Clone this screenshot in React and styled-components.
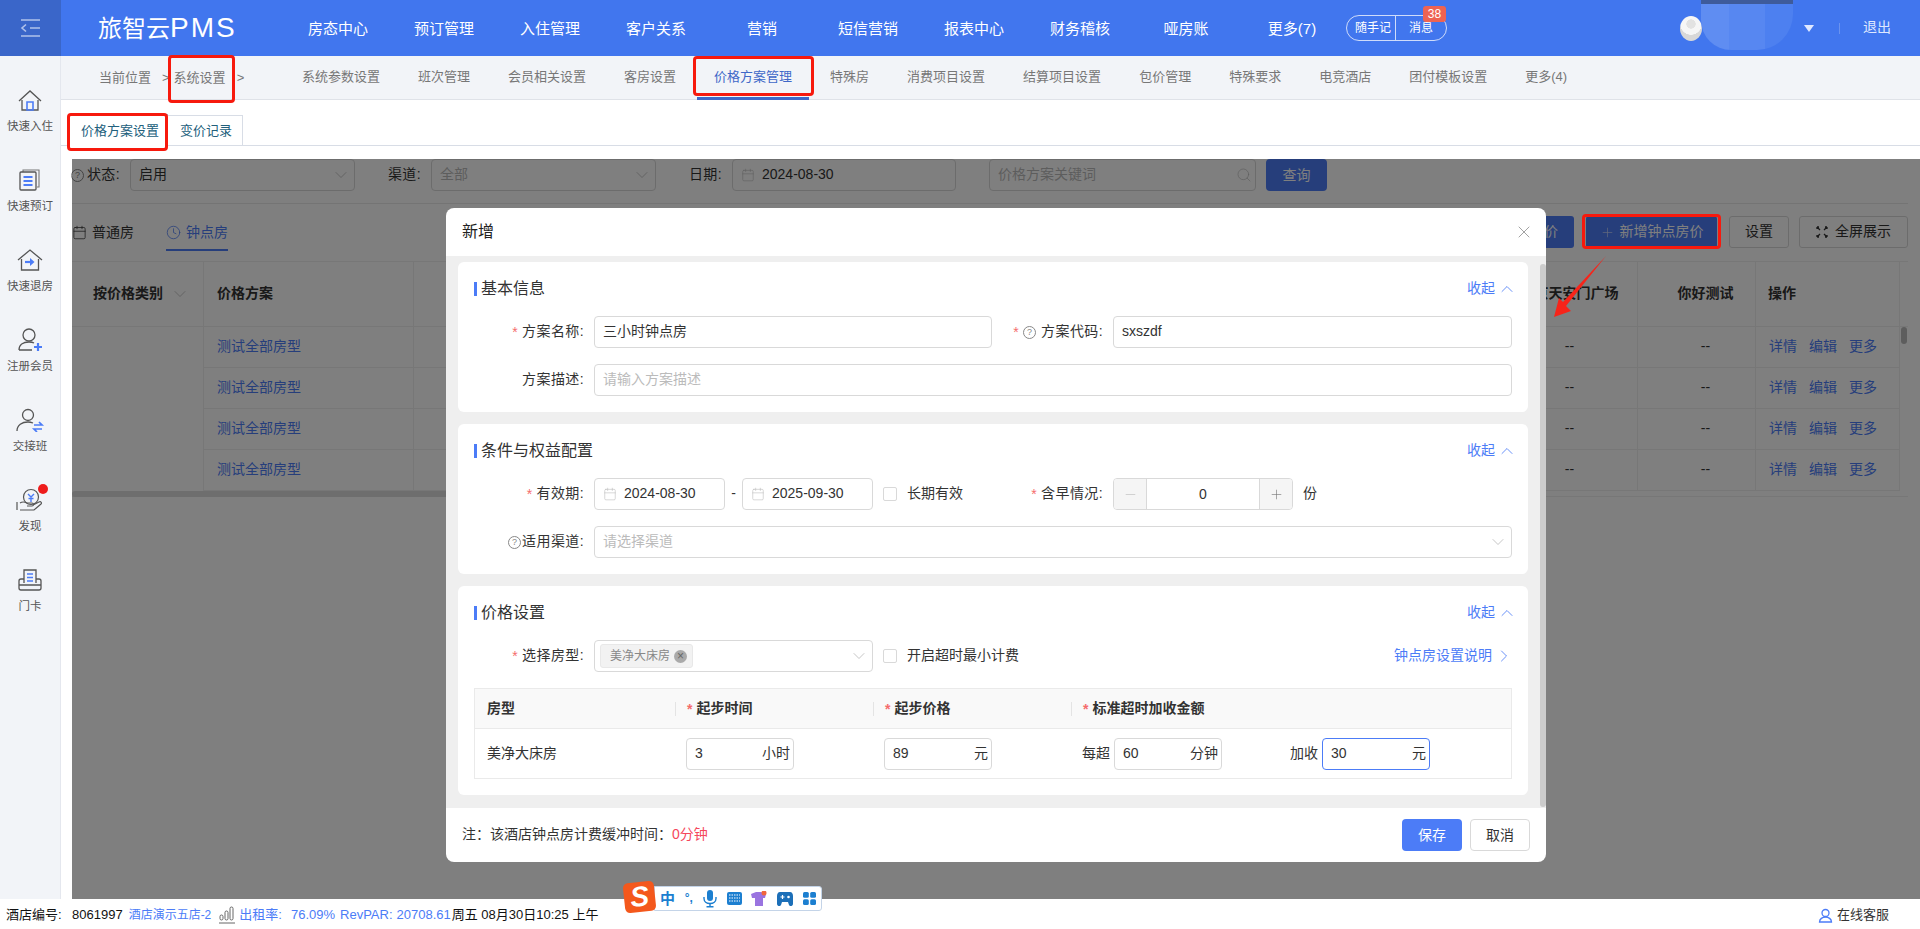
import React from 'react'
import styled, { createGlobalStyle } from 'styled-components'
import { Calendar, Clock, X, Plus, Minus, Search, ChevronDown, ChevronUp, ChevronRight } from 'lucide-react'

const BLUE = '#4c7cf7'
const FONT = '"Liberation Sans", "Noto Sans CJK SC", sans-serif'

const navItems = ['房态中心', '预订管理', '入住管理', '客户关系', '营销', '短信营销', '报表中心', '财务稽核', '哑房账', '更多(7)']
const subItems = ['系统参数设置', '班次管理', '会员相关设置', '客房设置', '价格方案管理', '特殊房', '消费项目设置', '结算项目设置', '包价管理', '特殊要求', '电竞酒店', '团付模板设置', '更多(4)']

const Help = ({ gap }) => <HelpMark $gap={gap}>?</HelpMark>
const Chevron = () => <ChevronDown size={20} strokeWidth={1} color="#bbb" />

const HomeIcon = () => (
  <svg width="28" height="24" viewBox="0 0 28 24" fill="none">
    <path d="M3 13 14 3l11 10M6 12v10h16V12" stroke="#555" strokeWidth="1.3" />
    <path d="M11 14h6v8h-6z" stroke={BLUE} strokeWidth="1.6" />
  </svg>
)
const BookIcon = () => (
  <svg width="28" height="24" viewBox="0 0 28 24" fill="none">
    <path d="M7 4V2h16v17h-2" stroke="#777" strokeWidth="1.1" />
    <rect x="4" y="4" width="16" height="18" rx="1" stroke="#555" strokeWidth="1.3" />
    <path d="M7.5 9h9M7.5 13h9M7.5 17h9" stroke={BLUE} strokeWidth="1.8" />
  </svg>
)
const OutIcon = () => (
  <svg width="28" height="24" viewBox="0 0 28 24" fill="none">
    <path d="M2 12 14 2l12 10M5.500 11v11h17V11" stroke="#555" strokeWidth="1.3" />
    <path d="M9 14h8" stroke={BLUE} strokeWidth="2.2" />
    <path d="m14 10 4.500 4-4.500 4z" fill={BLUE} />
  </svg>
)
const JoinIcon = () => (
  <svg width="28" height="24" viewBox="0 0 28 24" fill="none">
    <circle cx="13" cy="7" r="6" stroke="#555" strokeWidth="1.3" />
    <path d="M3 22c0-5 4-8 10-8 2 0 4 .4 5 1M3 22h13" stroke="#555" strokeWidth="1.3" />
    <path d="M22 15v8M18 19h8" stroke={BLUE} strokeWidth="2.200" />
  </svg>
)
const ShiftIcon = () => (
  <svg width="30" height="24" viewBox="0 0 30 24" fill="none">
    <circle cx="13" cy="7" r="5.500" stroke="#555" strokeWidth="1.3" />
    <path d="M2 23c0-6 5-9 11-9 2 0 3 .2 5 1" stroke="#555" strokeWidth="1.3" />
    <path d="M19 17h8l-3-3M27 21h-8l3 3" stroke={BLUE} strokeWidth="1.700" />
  </svg>
)
const FindIcon = () => (
  <svg width="30" height="24" viewBox="0 0 30 24" fill="none">
    <circle cx="16" cy="9" r="7.500" stroke="#555" strokeWidth="1.2" />
    <path d="M13 6l3 3 3-3M16 9v5M13.500 10.500h5" stroke={BLUE} strokeWidth="1.4" />
    <path d="M2 14v8M5 15c3-2 5-1 7 0h5c2 0 2 3 0 3h-5M18 17l6-3c2-1 3 1 2 2l-7 6H5" stroke="#555" strokeWidth="1.2" />
  </svg>
)
const CardIcon = () => (
  <svg width="28" height="24" viewBox="0 0 28 24" fill="none">
    <path d="M8 15V2h12v13" stroke="#555" strokeWidth="1.3" />
    <path d="M11 6h6M11 9.500h6M11 13h6" stroke={BLUE} strokeWidth="1.4" />
    <path d="M8 11H5c-1 0-2 1-2 2v7c0 1 1 2 2 2h18c1 0 2-1 2-2v-7c0-1-1-2-2-2h-3M3 17h22" stroke="#555" strokeWidth="1.3" />
  </svg>
)
const FullIcon = () => (
  <svg width="12" height="12" viewBox="0 0 12 12" fill="none" stroke="#333" strokeWidth="1.3">
    <path d="M1 1l3 3M11 1 8 4M1 11l3-3M11 11 8 8M1 1h2M1 1v2M11 1H9M11 1v2M1 11h2M1 11V9M11 11H9M11 11V9" />
  </svg>
)
const BarsIcon = () => (
  <svg width="16" height="18" viewBox="0 0 16 18" fill="none" stroke="#666" strokeWidth="1">
    <rect x="1" y="9" width="3" height="5" rx="1.500" />
    <rect x="6" y="5" width="3" height="9" rx="1.500" />
    <rect x="11" y="1" width="3" height="13" rx="1.500" />
    <path d="M0 17h16" />
  </svg>
)
const ServiceIcon = () => (
  <svg width="15" height="15" viewBox="0 0 15 15" fill="none" stroke={BLUE} strokeWidth="1.300">
    <circle cx="7.500" cy="5" r="3.500" />
    <path d="M1.500 14c0-3 3-5 6-5s6 2 6 5z" />
  </svg>
)

const sideItems = [
  { label: '快速入住', icon: <HomeIcon /> },
  { label: '快速预订', icon: <BookIcon /> },
  { label: '快速退房', icon: <OutIcon /> },
  { label: '注册会员', icon: <JoinIcon /> },
  { label: '交接班', icon: <ShiftIcon /> },
  { label: '发现', icon: <FindIcon />, dot: true },
  { label: '门卡', icon: <CardIcon /> },
]

const Fold = () => (
  <FoldLink>收起<ChevronUp size={20} strokeWidth={1} /></FoldLink>
)

const DateBox = ({ value, wide }) => (
  <Box $w={wide || 131}>
    <Calendar size={14} strokeWidth={1} color="#bbb" />
    <DateText>{value}</DateText>
  </Box>
)

const Suffixed = ({ value, unit, focus }) => (
  <UnitBox $focus={focus}>
    <span>{value}</span>
    <span>{unit}</span>
  </UnitBox>
)

const App = () => (
  <Page>
    <GlobalStyle />
    <TopBar>
      <Toggle>
        <svg width="22" height="22" viewBox="0 0 22 22" fill="none" stroke="#b0c2ea" strokeWidth="1.6">
          <path d="M1 3h19M10 11h10M1 19h19M6 7.500 2 11l4 3.500" />
        </svg>
      </Toggle>
      <Logo>旅智云<LogoLatin>PMS</LogoLatin></Logo>
      {navItems.map(item => <NavItem key={item}>{item}</NavItem>)}
      <Pill>
        <PillPart>随手记</PillPart>
        <PillPart $last>消息</PillPart>
        <Badge>38</Badge>
      </Pill>
      <UserArea>
        <Avatar />
        <BlobGap />
        <Caret />
        <UserDivider />
        <Logout>退出</Logout>
      </UserArea>
    </TopBar>

    <Middle>
      <Sidebar>
        {sideItems.map(item => (
          <SideItem key={item.label}>
            <SideIcon>
              {item.icon}
              {item.dot && <RedDot />}
            </SideIcon>
            <SideLabel>{item.label}</SideLabel>
          </SideItem>
        ))}
      </Sidebar>

      <Main>
        <SubNav>
          <Crumbs>
            <span>当前位置</span>
            <CrumbSep>&gt;</CrumbSep>
            <span>系统设置</span>
            <CrumbSep>&gt;</CrumbSep>
          </Crumbs>
          {subItems.map(item => (
            <SubTab key={item} $active={item === '价格方案管理'}>{item}</SubTab>
          ))}
        </SubNav>

        <PageTabs>
          <PageTab $active>价格方案设置</PageTab>
          <PageTab>变价记录</PageTab>
        </PageTabs>

        <Content>
          <FilterRow>
            <FilterLabel $w={58}><Help />状态:</FilterLabel>
            <FilterBox $w={225}>启用<Chevron /></FilterBox>
            <FilterLabel $w={76}>渠道:</FilterLabel>
            <FilterBox $w={225} $muted>全部<Chevron /></FilterBox>
            <FilterLabel $w={76}>日期:</FilterLabel>
            <FilterBox $w={224} $start>
              <Calendar size={14} strokeWidth={1} color="#bbb" />
              <span>2024-08-30</span>
            </FilterBox>
            <FilterBox $w={267} $muted $gapLeft={33}>价格方案关键词<Search size={16} strokeWidth={1} color="#bbb" /></FilterBox>
            <QueryButton>查询</QueryButton>
          </FilterRow>

          <TypeRow>
            <TypeTab><Calendar size={15} strokeWidth={1.2} />普通房</TypeTab>
            <TypeTab $active><Clock size={15} strokeWidth={1.2} />钟点房</TypeTab>
            <Actions>
              <PrimaryButton $w={88}>批量改价</PrimaryButton>
              <PrimaryButton $w={131}><Plus size={15} strokeWidth={1.1} color="#c7d4f7" />新增钟点房价</PrimaryButton>
              <PlainButton $w={60}>设置</PlainButton>
              <PlainButton $w={109}><FullIcon />全屏展示</PlainButton>
            </Actions>
          </TypeRow>

          <PriceTable>
            <HeadCell $pad={21}>按价格类别<Chevron /></HeadCell>
            <HeadCell $pad={13}>价格方案</HeadCell>
            <HeadCell />
            <HeadCell $center>北京天安门广场</HeadCell>
            <HeadCell $center $shift>你好测试</HeadCell>
            <HeadCell $pad={12}>操作</HeadCell>
            <HeadCell $bare />
            <MergedCell />
            {[0, 1, 2, 3].map(row => (
              <React.Fragment key={row}>
                <LinkCell>测试全部房型</LinkCell>
                <BodyCell />
                <BodyCell $center>--</BodyCell>
                <BodyCell $center $shift>--</BodyCell>
                <ActionCell><a>详情</a><a>编辑</a><a>更多</a></ActionCell>
                {row === 0 && <VScroll><VThumb /></VScroll>}
              </React.Fragment>
            ))}
          </PriceTable>
          <HScroll><HThumb /></HScroll>

          <Mask>
            <Dialog>
              <DialogHead>
                <DialogTitle>新增</DialogTitle>
                <X size={20} strokeWidth={1.1} color="#999" />
              </DialogHead>
              <DialogBody>
                <Cards>
                  <Card>
                    <CardHead><CardTitle>基本信息</CardTitle><Fold /></CardHead>
                    <FormGrid>
                      <Label><Req />方案名称:</Label>
                      <Box>三小时钟点房</Box>
                      <Label><Req /><Help gap={5} />方案代码:</Label>
                      <Box>sxszdf</Box>
                    </FormGrid>
                    <FormGrid>
                      <Label>方案描述:</Label>
                      <Wide><Box $muted>请输入方案描述</Box></Wide>
                    </FormGrid>
                  </Card>

                  <Card>
                    <CardHead><CardTitle>条件与权益配置</CardTitle><Fold /></CardHead>
                    <FormGrid>
                      <Label><Req />有效期:</Label>
                      <Inline>
                        <DateBox value="2024-08-30" />
                        <Dash>-</Dash>
                        <DateBox value="2025-09-30" />
                        <Tick />
                        <span>长期有效</span>
                      </Inline>
                      <Label><Req />含早情况:</Label>
                      <Inline>
                        <Stepper>
                          <StepSide><Minus size={15} strokeWidth={1} color="#bbb" /></StepSide>
                          <StepValue>0</StepValue>
                          <StepSide $right><Plus size={15} strokeWidth={1} color="#777" /></StepSide>
                        </Stepper>
                        <Unit>份</Unit>
                      </Inline>
                    </FormGrid>
                    <FormGrid>
                      <Label><Help gap={1} />适用渠道:</Label>
                      <Wide>
                        <Box $muted $between>请选择渠道<Chevron /></Box>
                      </Wide>
                    </FormGrid>
                  </Card>

                  <Card>
                    <CardHead><CardTitle>价格设置</CardTitle><Fold /></CardHead>
                    <FormGrid>
                      <Label><Req />选择房型:</Label>
                      <Inline>
                        <Box $w={279} $between $tag>
                          <Tag>美净大床房<TagClose>×</TagClose></Tag>
                          <Chevron />
                        </Box>
                        <Tick />
                        <span>开启超时最小计费</span>
                      </Inline>
                      <HelpLink>钟点房设置说明<ChevronRight size={20} strokeWidth={1} /></HelpLink>
                    </FormGrid>
                    <RoomTable>
                      <RoomHead>
                        <RoomHeadCell>房型</RoomHeadCell>
                        <RoomHeadCell $sep><Req />起步时间</RoomHeadCell>
                        <RoomHeadCell $sep><Req />起步价格</RoomHeadCell>
                        <RoomHeadCell $sep><Req />标准超时加收金额</RoomHeadCell>
                      </RoomHead>
                      <RoomRow>
                        <RoomCell>美净大床房</RoomCell>
                        <RoomCell><Suffixed value="3" unit="小时" /></RoomCell>
                        <RoomCell><Suffixed value="89" unit="元" /></RoomCell>
                        <RoomCell>
                          <span>每超</span>
                          <Suffixed value="60" unit="分钟" />
                          <ExtraLabel>加收</ExtraLabel>
                          <Suffixed value="30" unit="元" focus />
                        </RoomCell>
                      </RoomRow>
                    </RoomTable>
                  </Card>
                </Cards>
                <DialogScroll />
              </DialogBody>
              <DialogFoot>
                <span>注：该酒店钟点房计费缓冲时间：<Warn>0分钟</Warn></span>
                <FootButtons>
                  <SaveButton>保存</SaveButton>
                  <CancelButton>取消</CancelButton>
                </FootButtons>
              </DialogFoot>
            </Dialog>
          </Mask>
        </Content>
      </Main>
    </Middle>

    <BottomBar>
      <HotelNo>酒店编号:</HotelNo>
      <Digits>8061997</Digits>
      <BlueText $left={6} $size={12}>酒店演示五店-2</BlueText>
      <BarSlot><BarsIcon /></BarSlot>
      <BlueText $left={4} $size={13}>出租率:</BlueText>
      <BlueText $left={9} $size={13}>76.09%</BlueText>
      <BlueText $left={5} $size={13}>RevPAR:</BlueText>
      <BlueText $left={4} $size={13}>20708.61</BlueText>
      <ClockText>周五 08月30日10:25 上午</ClockText>
      <Service><ServiceIcon />在线客服</Service>
    </BottomBar>

    <ImeBar>
      <ImeLogo><span>S</span></ImeLogo>
      <ImeChar>中</ImeChar>
      <ImeChar $small>°,</ImeChar>
      <svg width="14" height="18" viewBox="0 0 14 18" fill="#1c7fd0">
        <rect x="4" y="0" width="6" height="11" rx="3" />
        <path d="M1 7v1.500c0 3 2.500 5 6 5s6-2 6-5V7" fill="none" stroke="#1c7fd0" strokeWidth="1.400" />
        <path d="M6.300 13h1.400v3H6.300zM3.500 16h7v1.400h-7z" />
      </svg>
      <svg width="15" height="13" viewBox="0 0 15 13">
        <rect width="15" height="13" rx="2" fill="#1c7fd0" />
        <path d="M2 3h11M2 6h11M2 9h11" stroke="#fff" strokeWidth="1.200" strokeDasharray="1.500 1" />
      </svg>
      <svg width="16" height="16" viewBox="0 0 16 16">
        <path d="M0 3 5 1h5l5 2-1 4h-2v8H4V7H1z" fill="#9a74e0" />
        <circle cx="13" cy="2" r="2.500" fill="#f0653c" />
      </svg>
      <svg width="16" height="16" viewBox="0 0 16 16">
        <path d="M3 1h10c2 0 3 2 3 4v8c0 2-3 3-4 1l-1-3H5l-1 3c-1 2-4 1-4-1V5c0-2 1-4 3-4z" fill="#1c6fb8" />
        <path d="M3.500 6h4M5.500 4v4" stroke="#fff" strokeWidth="1.200" />
        <circle cx="11.500" cy="6" r="1.300" fill="#fff" />
      </svg>
      <svg width="13" height="13" viewBox="0 0 13 13" fill="#1c7fd0">
        <rect width="5.800" height="5.800" rx="1.500" />
        <rect x="7.200" width="5.800" height="5.800" rx="1.500" />
        <rect y="7.200" width="5.800" height="5.800" rx="1.500" />
        <rect x="7.200" y="7.200" width="5.800" height="5.800" rx="1.500" />
      </svg>
    </ImeBar>

    <UserBlob />
    <Mark $x={168} $y={55} $w={67} $h={48} />
    <Mark $x={693} $y={56} $w={121} $h={40} />
    <Mark $x={67} $y={113} $w={101} $h={38} />
    <Mark $x={1582} $y={214} $w={139} $h={35} />
    <ArrowMark width="60" height="66" viewBox="0 0 60 66">
      <path d="M55 1 15 51 20 56 3 62 8 43 12 47z" fill="#f7241a" />
    </ArrowMark>
  </Page>
)

export default App

const GlobalStyle = createGlobalStyle`
  html, body { margin: 0; padding: 0; background: #fff; }
  body { font: 14px/1.4 ${FONT}; color: #333; }
  * { box-sizing: border-box; }
`

const Page = styled.div`
  position: relative;
  width: 1920px;
  height: 929px;
  overflow: hidden;
  display: flex;
  flex-direction: column;
`

const TopBar = styled.header`
  height: 56px;
  flex: none;
  display: flex;
  align-items: center;
  background: #4176ee;
  color: #fff;
`

const Toggle = styled.div`
  width: 61px;
  height: 56px;
  flex: none;
  display: flex;
  align-items: center;
  justify-content: center;
  background: #3a66c9;
`

const Logo = styled.div`
  width: 224px;
  flex: none;
  padding-left: 37px;
  font-size: 24px;
  line-height: 30px;
  white-space: nowrap;
`

const LogoLatin = styled.span`
  font-size: 28px;
  letter-spacing: 2px;
`

const NavItem = styled.div`
  width: 106px;
  flex: none;
  text-align: center;
  font-size: 15px;
  white-space: nowrap;
`

const Pill = styled.div`
  position: relative;
  display: flex;
  width: 101px;
  height: 26px;
  flex: none;
  margin-left: 1px;
  border: 1px solid #cfdcfa;
  border-radius: 13px;
  font-size: 12px;
`

const PillPart = styled.div`
  flex: ${p => (p.$last ? 1 : 'none')};
  width: ${p => (p.$last ? 'auto' : '49px')};
  padding-left: ${p => (p.$last ? '13px' : '8px')};
  line-height: 24px;
  border-right: ${p => (p.$last ? 'none' : '1px solid #cfdcfa')};
`

const Badge = styled.div`
  position: absolute;
  top: -10px;
  left: 76px;
  width: 23px;
  height: 16px;
  border-radius: 3px;
  background: #ee6352;
  font-size: 12px;
  line-height: 16px;
  text-align: center;
`

const UserArea = styled.div`
  margin-left: auto;
  padding-right: 29px;
  display: flex;
  align-items: center;
`

const Avatar = styled.div`
  width: 22px;
  height: 25px;
  border-radius: 50%;
  background: radial-gradient(circle at 50% 32%, #e2e2e2 0 22%, #f6f6f6 24% 52%, #d8d8d8 54%);
`

const BlobGap = styled.div`
  width: 102px;
`

const Caret = styled.div`
  width: 0;
  height: 0;
  border-left: 5px solid transparent;
  border-right: 5px solid transparent;
  border-top: 7px solid #dfe8ff;
`

const UserDivider = styled.div`
  width: 1px;
  height: 11px;
  margin: 0 23px 0 25px;
  background: #6b93ee;
`

const Logout = styled.div`
  color: #dfe8ff;
`

const UserBlob = styled.div`
  position: absolute;
  left: 1701px;
  top: 0;
  width: 92px;
  height: 50px;
  border-radius: 0 0 36px 30px;
  background:
    linear-gradient(#3e5b9b 0 4px, transparent 4px),
    linear-gradient(90deg, #5f8df2 0 30%, #5787f1 30% 70%, #4d80f0 70%);
`

const Middle = styled.div`
  flex: 1;
  min-height: 0;
  display: flex;
`

const Sidebar = styled.nav`
  width: 61px;
  flex: none;
  padding-top: 32px;
  background: #f2f4f8;
  border-right: 1px solid #e4e7ee;
`

const SideItem = styled.div`
  height: 80px;
  display: flex;
  flex-direction: column;
  align-items: center;
`

const SideIcon = styled.div`
  position: relative;
  height: 24px;
  display: flex;
  justify-content: center;
`

const RedDot = styled.span`
  position: absolute;
  top: -4px;
  right: -3px;
  width: 10px;
  height: 10px;
  border-radius: 50%;
  background: #ee1c1c;
`

const SideLabel = styled.div`
  margin-top: 7px;
  font-size: 11.5px;
  line-height: 14px;
  color: #555;
  white-space: nowrap;
`

const Main = styled.main`
  flex: 1;
  min-width: 0;
  display: flex;
  flex-direction: column;
`

const SubNav = styled.div`
  height: 44px;
  flex: none;
  display: flex;
  gap: 4px;
  background: #f2f4f8;
  border-bottom: 1px solid #dfe2e8;
  font-size: 13px;
  color: #777;
`

const Crumbs = styled.div`
  width: 220px;
  padding: 2px 0 0 38px;
  display: flex;
  align-items: center;
`

const CrumbSep = styled.span`
  margin: 0 4px 0 11px;
`

const SubTab = styled.div`
  padding: 0 17px;
  line-height: 42px;
  height: 44px;
  white-space: nowrap;
  color: ${p => (p.$active ? '#3f68c8' : '#777')};
  border-bottom: 3px solid ${p => (p.$active ? '#3f68c8' : 'transparent')};
`

const PageTabs = styled.div`
  height: 46px;
  flex: none;
  display: flex;
  align-items: flex-end;
  padding-left: 7px;
  border-bottom: 1px solid #d8dde6;
  font-size: 13px;
`

const PageTab = styled.div`
  height: ${p => (p.$active ? '32px' : '31px')};
  margin-bottom: -1px;
  padding: ${p => (p.$active ? '0 8px 0 12px' : '0 10px 0 12px')};
  line-height: 30px;
  color: #22607c;
  background: #fff;
  border: 1px solid #d8dde6;
  border-left: ${p => (p.$active ? '1px solid #d8dde6' : 'none')};
  border-top: ${p => (p.$active ? '2px solid #7ab0d8' : '1px solid #d8dde6')};
  border-bottom: ${p => (p.$active ? '1px solid #fff' : '1px solid #d8dde6')};
`

const Content = styled.div`
  position: relative;
  flex: 1;
  min-height: 0;
  margin: 13px 0 0 11px;
  padding-right: 12px;
`

const FilterRow = styled.div`
  display: flex;
  height: 45px;
  padding-bottom: 12px;
  border-bottom: 1px solid #e8e8e8;
`

const FilterLabel = styled.div`
  width: ${p => p.$w}px;
  padding-right: 10px;
  display: flex;
  align-items: center;
  justify-content: flex-end;
  letter-spacing: 0.4px;
  white-space: nowrap;
`

const FilterBox = styled.div`
  width: ${p => p.$w}px;
  margin-left: ${p => p.$gapLeft || 0}px;
  padding: 0 8px;
  display: flex;
  align-items: center;
  justify-content: ${p => (p.$start ? 'flex-start' : 'space-between')};
  gap: 7px;
  border: 1px solid #d9d9d9;
  border-radius: 4px;
  color: ${p => (p.$muted ? '#bbb' : '#333')};
  & > svg:last-child { margin-right: -5px; }
`

const QueryButton = styled.div`
  width: 61px;
  margin-left: 10px;
  border-radius: 4px;
  background: ${BLUE};
  color: #fff;
  text-align: center;
  line-height: 32px;
`

const TypeRow = styled.div`
  height: 57px;
  display: flex;
  align-items: flex-start;
  gap: 32px;
`

const TypeTab = styled.div`
  height: 47px;
  padding-top: 12px;
  display: flex;
  align-items: center;
  gap: 5px;
  color: ${p => (p.$active ? '#4c7cf7' : '#333')};
  border-bottom: 2px solid ${p => (p.$active ? '#4c7cf7' : 'transparent')};
`

const Actions = styled.div`
  margin: 12px 0 0 auto;
  display: flex;
  gap: 12px;
`

const PrimaryButton = styled.div`
  width: ${p => p.$w}px;
  height: 32px;
  display: flex;
  align-items: center;
  justify-content: center;
  gap: 5px;
  border-radius: 3px;
  background: ${BLUE};
  color: #fff;
  font-size: 14px;
`

const PlainButton = styled(PrimaryButton)`
  margin-left: ${p => (p.$w === 109 ? '-2px' : 0)};
  gap: 7px;
  background: #fff;
  border: 1px solid #d9d9d9;
  color: #333;
`

const PriceTable = styled.div`
  display: grid;
  grid-template-columns: 132px 210px 1fr 136px 118px 144px 8px;
  grid-template-rows: 65px repeat(4, 41px);
  border-top: 1px solid #eee;
`

const HeadCell = styled.div`
  display: flex;
  align-items: center;
  gap: 7px;
  justify-content: ${p => (p.$center ? 'center' : 'flex-start')};
  padding-left: ${p => p.$pad || 0}px;
  font-weight: bold;
  white-space: nowrap;
  border-right: ${p => (p.$bare ? 'none' : '1px solid #eee')};
  border-bottom: 1px solid #eee;
  overflow: ${p => (p.$shift ? 'visible' : 'hidden')};
  & > svg { flex: none; }
  ${p => p.$shift && 'padding-left: 18px;'}
`

const MergedCell = styled.div`
  grid-row: span 4;
  border-right: 1px solid #eee;
`

const BodyCell = styled.div`
  display: flex;
  align-items: center;
  justify-content: ${p => (p.$center ? 'center' : 'flex-start')};
  border-right: 1px solid #eee;
  border-bottom: 1px solid #eee;
  ${p => p.$shift && 'padding-left: 18px;'}
`

const LinkCell = styled(BodyCell)`
  padding-left: 13px;
  color: ${BLUE};
`

const ActionCell = styled(BodyCell)`
  padding-left: 13px;
  gap: 12px;
  color: ${BLUE};
`

const VScroll = styled.div`
  grid-row: span 4;
  padding: 0 1px;
`

const VThumb = styled.div`
  height: 17px;
  border-radius: 3px;
  background: #bbb;
`

const HScroll = styled.div`
  height: 6px;
  border-bottom: 1px solid #eee;
`

const HThumb = styled.div`
  width: 1330px;
  height: 6px;
  border-radius: 3px;
  background: #ddd;
`

const Mask = styled.div`
  position: absolute;
  inset: 0;
  padding-top: 49px;
  display: flex;
  justify-content: center;
  background: rgba(0, 0, 0, 0.5);
`

const Dialog = styled.div`
  width: 1100px;
  height: 654px;
  display: flex;
  flex-direction: column;
  overflow: hidden;
  border-radius: 8px;
  background: #fff;
`

const DialogHead = styled.div`
  height: 48px;
  flex: none;
  padding: 0 12px 0 16px;
  display: flex;
  align-items: center;
  justify-content: space-between;
`

const DialogTitle = styled.div`
  font-size: 16px;
  color: #222;
`

const DialogBody = styled.div`
  height: 552px;
  flex: none;
  display: flex;
  background: #efefef;
`

const Cards = styled.div`
  flex: 1;
  min-width: 0;
  padding: 6px 12px 0;
  display: flex;
  flex-direction: column;
  gap: 12px;
`

const DialogScroll = styled.div`
  width: 6px;
  flex: none;
  margin: 8px 0 1px;
  border-radius: 3px;
  background: #ccc;
`

const Card = styled.section`
  padding: 16px 16px 16px;
  border-radius: 6px;
  background: #fff;
`

const CardHead = styled.div`
  height: 22px;
  margin-bottom: 16px;
  display: flex;
  align-items: center;
  justify-content: space-between;
`

const CardTitle = styled.div`
  display: flex;
  align-items: center;
  gap: 4px;
  font-size: 16px;
  color: #333;
  &::before {
    content: '';
    width: 3px;
    height: 14px;
    background: ${BLUE};
  }
`

const FoldLink = styled.div`
  display: flex;
  align-items: center;
  gap: 2px;
  margin-right: -5px;
  color: ${BLUE};
`

const FormGrid = styled.div`
  display: grid;
  grid-template-columns: 120px 398px 121px 1fr;
  align-items: center;
  & + & { margin-top: 16px; }
`

const Label = styled.div`
  padding-right: 10px;
  display: flex;
  align-items: center;
  justify-content: flex-end;
  letter-spacing: 0.4px;
  white-space: nowrap;
`

const Req = styled.span`
  margin-right: 4px;
  color: #f56c6c;
  line-height: 1;
  &::before { content: '*'; }
`

const HelpMark = styled.span`
  width: 13px;
  height: 13px;
  margin-right: ${p => p.$gap ?? 3}px;
  flex: none;
  border: 1px solid #888;
  border-radius: 50%;
  color: #888;
  font-size: 9px;
  line-height: 11px;
  letter-spacing: 0;
  text-align: center;
`

const Box = styled.div`
  width: ${p => (p.$w ? `${p.$w}px` : '100%')};
  height: 32px;
  flex: none;
  padding: ${p => (p.$tag ? '0 8px 0 5px' : '0 8px')};
  display: flex;
  align-items: center;
  justify-content: ${p => (p.$between ? 'space-between' : 'flex-start')};
  border: 1px solid #d9d9d9;
  border-radius: 4px;
  background: #fff;
  color: ${p => (p.$muted ? '#bbb' : '#333')};
  & > svg:last-child { margin-right: ${p => (p.$between ? '-5px' : 0)}; }
`

const Wide = styled.div`
  grid-column: span 3;
`

const Inline = styled.div`
  display: flex;
  align-items: center;
  white-space: nowrap;
`

const DateText = styled.span`
  margin-left: 7px;
`

const Dash = styled.span`
  width: 17px;
  flex: none;
  text-align: center;
`

const Tick = styled.span`
  width: 14px;
  height: 14px;
  flex: none;
  margin: 0 10px;
  border: 1px solid #d9d9d9;
  border-radius: 2px;
`

const Stepper = styled.div`
  width: 180px;
  height: 32px;
  display: flex;
  border: 1px solid #d9d9d9;
  border-radius: 4px;
  overflow: hidden;
`

const StepSide = styled.div`
  width: 33px;
  display: flex;
  align-items: center;
  justify-content: center;
  background: #f5f5f5;
  border-left: ${p => (p.$right ? '1px solid #d9d9d9' : 'none')};
  border-right: ${p => (p.$right ? 'none' : '1px solid #d9d9d9')};
`

const StepValue = styled.div`
  flex: 1;
  line-height: 30px;
  text-align: center;
`

const Unit = styled.span`
  margin-left: 10px;
`

const Tag = styled.div`
  width: 93px;
  height: 24px;
  padding-left: 9px;
  display: flex;
  align-items: center;
  justify-content: space-between;
  padding-right: 5px;
  border: 1px solid #e8e8e8;
  border-radius: 3px;
  background: #f2f2f2;
  color: #888;
  font-size: 12px;
`

const TagClose = styled.span`
  width: 13px;
  height: 13px;
  border-radius: 50%;
  background: #aaa;
  color: #666;
  font-size: 12px;
  line-height: 12px;
  text-align: center;
`

const HelpLink = styled.div`
  grid-column: span 2;
  justify-self: end;
  display: flex;
  align-items: center;
  gap: 2px;
  margin-right: -2px;
  color: ${BLUE};
`

const RoomTable = styled.div`
  margin-top: 16px;
  border: 1px solid #eaeaea;
`

const RoomHead = styled.div`
  height: 40px;
  display: grid;
  grid-template-columns: 200px 198px 198px 1fr;
  align-items: center;
  background: #f9f9f9;
  border-bottom: 1px solid #eaeaea;
`

const RoomHeadCell = styled.div`
  height: 14px;
  padding-left: ${p => (p.$sep ? '11px' : '12px')};
  display: flex;
  align-items: center;
  font-weight: bold;
  color: #333;
  border-left: ${p => (p.$sep ? '1px solid #e4e4e4' : 'none')};
`

const RoomRow = styled.div`
  height: 49px;
  display: grid;
  grid-template-columns: 199px 198px 198px 1fr;
  align-items: center;
`

const RoomCell = styled.div`
  padding-left: 12px;
  display: flex;
  align-items: center;
  gap: 4px;
`

const ExtraLabel = styled.span`
  margin-left: 64px;
`

const UnitBox = styled.div`
  width: 108px;
  height: 32px;
  padding: 0 3px 0 8px;
  display: flex;
  align-items: center;
  justify-content: space-between;
  border: 1px solid ${p => (p.$focus ? BLUE : '#d9d9d9')};
  border-radius: 4px;
`

const DialogFoot = styled.div`
  flex: 1;
  padding: 0 16px;
  display: flex;
  align-items: center;
  justify-content: space-between;
`

const Warn = styled.span`
  color: #f5475b;
`

const FootButtons = styled.div`
  display: flex;
  gap: 8px;
`

const SaveButton = styled.div`
  width: 60px;
  height: 32px;
  border-radius: 4px;
  background: ${BLUE};
  color: #fff;
  line-height: 32px;
  text-align: center;
`

const CancelButton = styled(SaveButton)`
  background: #fff;
  border: 1px solid #d9d9d9;
  color: #333;
  line-height: 30px;
`

const BottomBar = styled.footer`
  height: 30px;
  flex: none;
  padding: 2px 31px 0 6px;
  display: flex;
  align-items: center;
  background: #fff;
  font-size: 12px;
  color: #111;
  white-space: nowrap;
`

const HotelNo = styled.span`
  width: 66px;
  font-size: 13px;
`

const Digits = styled.span`
  font-size: 13px;
`

const BlueText = styled.span`
  margin-left: ${p => p.$left}px;
  font-size: ${p => p.$size}px;
  color: ${BLUE};
`

const BarSlot = styled.span`
  display: flex;
  margin-left: 8px;
`

const ClockText = styled.span`
  margin-left: 1px;
  font-size: 13px;
`

const Service = styled.div`
  margin-left: auto;
  display: flex;
  align-items: center;
  gap: 4px;
  font-size: 13px;
  color: #333;
`

const ImeBar = styled.div`
  position: absolute;
  left: 654px;
  top: 886px;
  width: 168px;
  height: 25px;
  padding: 0 5px 0 5px;
  display: flex;
  align-items: center;
  justify-content: space-between;
  background: #fff;
  border: 1px solid #c4d4e8;
  border-radius: 0 3px 3px 0;
`

const ImeLogo = styled.div`
  position: absolute;
  left: -31px;
  top: -5px;
  width: 31px;
  height: 30px;
  display: flex;
  align-items: center;
  justify-content: center;
  border-radius: 5px;
  background: #f4581c;
  color: #fff;
  font-size: 28px;
  font-weight: bold;
  font-style: italic;
  transform: rotate(-6deg);
`

const ImeChar = styled.span`
  color: #1c7fd0;
  font-weight: bold;
  font-size: ${p => (p.$small ? '12px' : '15px')};
`

const Mark = styled.div`
  position: absolute;
  left: ${p => p.$x}px;
  top: ${p => p.$y}px;
  width: ${p => p.$w}px;
  height: ${p => p.$h}px;
  border: 3px solid #f7190d;
  border-radius: 4px;
`

const ArrowMark = styled.svg`
  position: absolute;
  left: 1551px;
  top: 255px;
`
